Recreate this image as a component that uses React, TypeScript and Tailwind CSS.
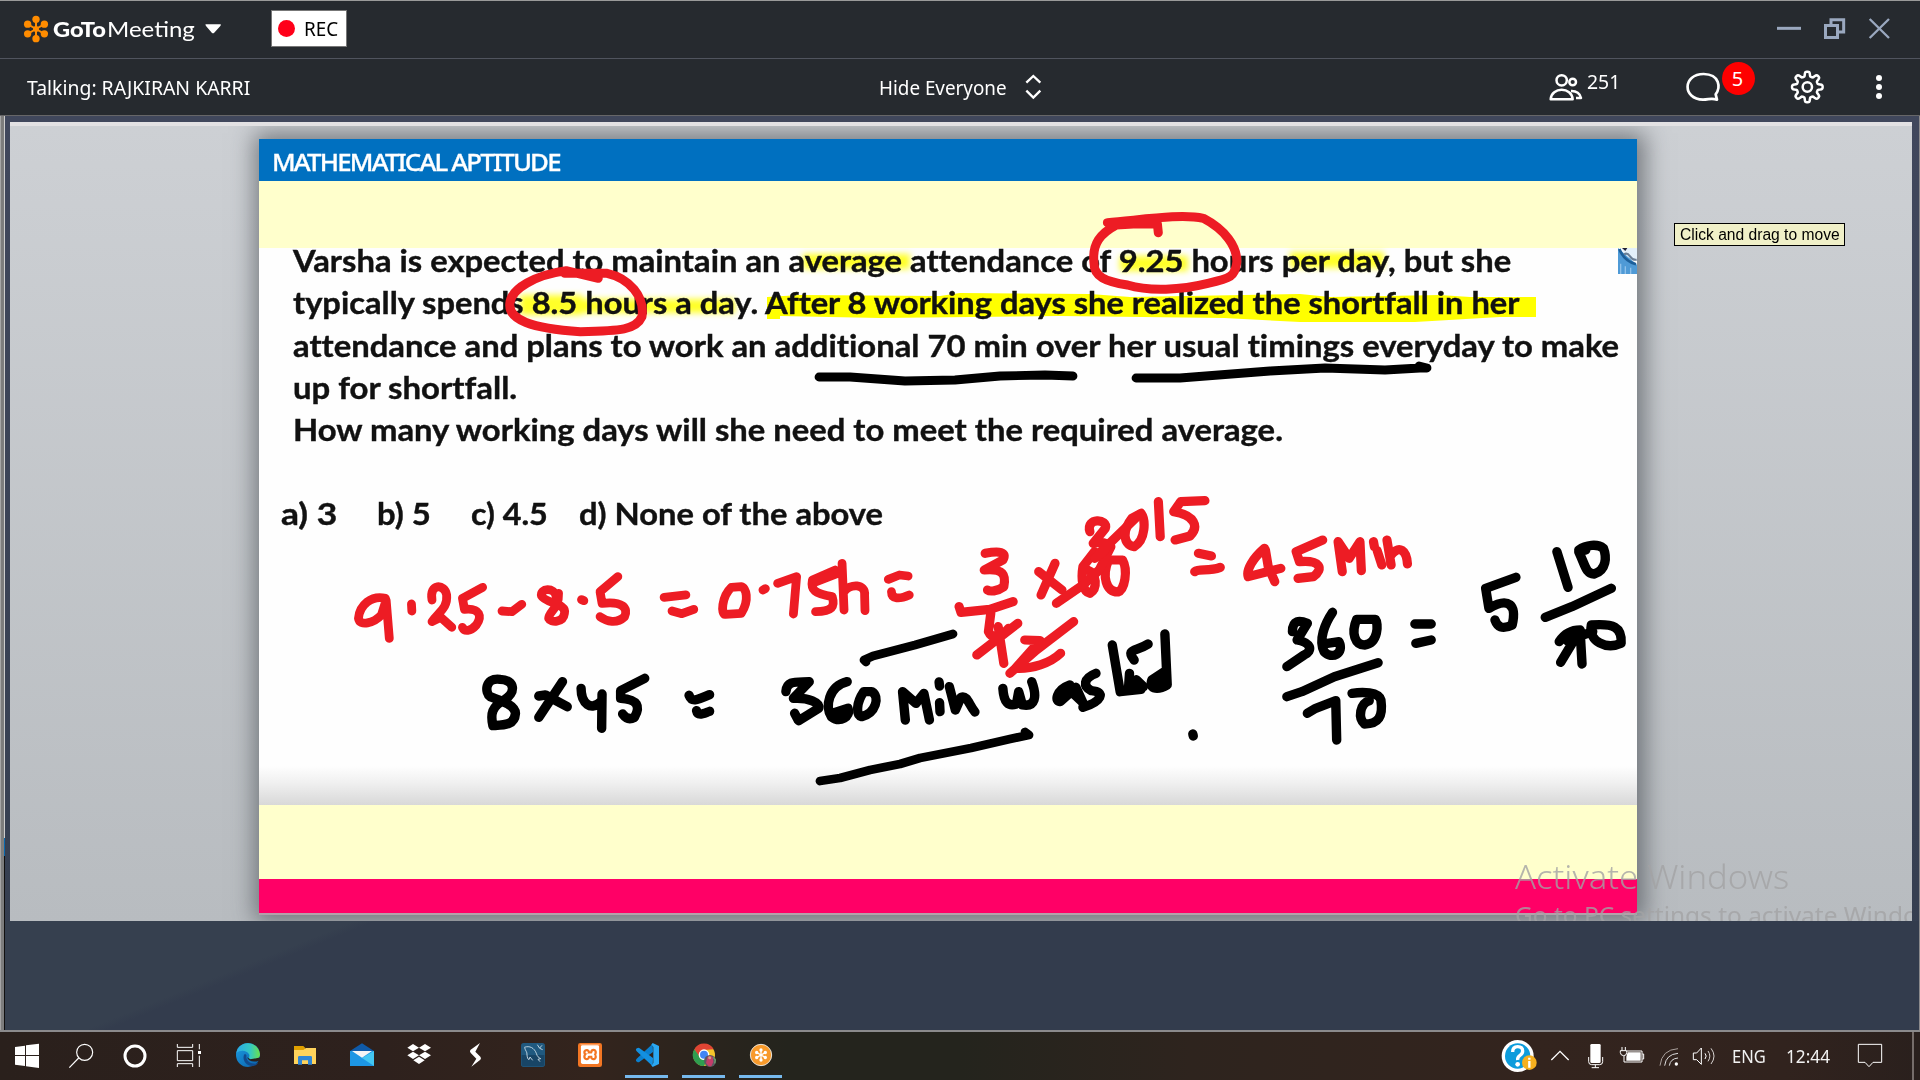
import React, { useLayoutEffect, useRef, useState } from "react";
import { SiXampp } from "react-icons/si";

/* Text squeezed or stretched horizontally to a given width. */
function Fit({ w, className = "", children }: { w: number; className?: string; children: string }) {
  const ref = useRef<HTMLSpanElement>(null);
  const [k, setK] = useState(1);
  useLayoutEffect(() => {
    if (ref.current) setK(w / ref.current.offsetWidth);
  }, [w]);
  return (
    <span className={"block shrink-0 " + className} style={{ width: w }}>
      <span ref={ref} className="inline-block origin-left whitespace-pre" style={{ transform: `scaleX(${k})` }}>
        {children}
      </span>
    </span>
  );
}

/* Toolbar icon: the view box is counted in thirds of a pixel. */
function Ico({ box, w, h, className = "", children }: { box: string; w: number; h: number; className?: string; children: React.ReactNode }) {
  return (
    <svg viewBox={box} width={w} height={h} fill="none" className={"block shrink-0 " + className}>
      {children}
    </svg>
  );
}

function Asterisk({ cx, cy, r, dot, line, color }: { cx: number; cy: number; r: number; dot: number; line: number; color: string }) {
  return (
    <g stroke={color} fill={color} strokeWidth={line}>
      {[30, 90, 150, 210, 270, 330].map((a) => {
        const x = cx + r * Math.cos((a * Math.PI) / 180);
        const y = cy + r * Math.sin((a * Math.PI) / 180);
        return (
          <g key={a}>
            <line x1={cx} y1={cy} x2={x} y2={y} />
            <circle cx={x} cy={y} r={dot} stroke="none" />
          </g>
        );
      })}
    </g>
  );
}

function TitleBar() {
  return (
    <header className="flex h-[58px] shrink-0 items-center border-t border-[#9a9a9a] bg-[#262a2f] pb-[2px] pl-[23px] font-['Noto_Sans',sans-serif] text-[20px] text-white">
      <Ico box="69 45 78 84" w={26} h={28}>
        <Asterisk cx={108} cy={87} r={29} dot={11} line={6} color="#ff8c00" />
        <circle cx={108} cy={87} r={9} fill="#ff8c00" />
      </Ico>
      <div className="ml-1 flex items-baseline gap-px font-[Lato,sans-serif] text-[21px]">
        <Fit w={53} className="font-black">GoTo</Fit>
        <Fit w={88} className="font-normal">Meeting</Fit>
      </div>
      <Ico box="615 72 51 33" w={17} h={11} className="ml-2.5">
        <path d="M617 76h44q4 1 0 5l-19 21q-3 2-6 0l-18-21q-3-4-1-5z" fill="#fff" />
      </Ico>
      <div className="ml-[49px] flex h-[37px] w-[76px] items-center border border-[#777] bg-white pl-1.5 text-black">
        <span className="size-[17px] rounded-full bg-[#ff0019]" />
        <Fit w={34} className="ml-[9px]">REC</Fit>
      </div>
      <Ico box="2322 45 360 84" w={120} h={28} className="mr-[26px] ml-auto">
        <g stroke="#9aa8bf">
          <path d="M2331 85h72" strokeWidth="9" />
          <path d="M2476.500 76.500h36v36h-36zM2493 72v-13h38v37h-15" strokeWidth="9" />
          <path d="M2609 57l58 57M2667 57l-58 57" strokeWidth="7" />
        </g>
      </Ico>
    </header>
  );
}

const gear = (() => {
  const pts: string[] = [];
  for (let i = 0; i <= 160; i++) {
    const a = (i / 160) * Math.PI * 2;
    const c = Math.cos(a * 8);
    const r = 39 + 7 * Math.tanh(2.2 * c);
    pts.push(`${(922 + r * Math.sin(a)).toFixed(1)} ${(260 - r * Math.cos(a)).toFixed(1)}`);
  }
  return "M" + pts.join("L") + "Z";
})();

function ToolBar() {
  return (
    <div className="flex h-[58px] shrink-0 items-center border-t border-b border-t-[#50545e] border-b-[#666668] bg-[#262a2f] pl-[27px] font-['Noto_Sans',sans-serif] text-[20px] text-white">
      <Fit w={223} className="pt-0.5">Talking: RAJKIRAN KARRI</Fit>
      <Fit w={128} className="ml-[629px] pt-0.5">Hide Everyone</Fit>
      <Ico box="552 216 57 90" w={19} h={30} className="ml-[17px]">
        <path d="M559 248l21-20 21 20M559 272l21 21 21-21" stroke="#fff" strokeWidth="7" />
      </Ico>
      <Ico box="144 216 105 90" w={35} h={30} className="ml-[505px]">
        <g stroke="#fff" strokeWidth="7.500" strokeLinejoin="round">
          <circle cx="185" cy="241" r="15.500" />
          <circle cx="218" cy="246" r="10" />
          <path d="M152 298c2-38 64-38 66 0zM213 273c16-1 28 8 30 21l-15 0" />
        </g>
      </Ico>
      <Fit w={33} className="relative -top-[5px] ml-1">251</Fit>
      <div className="relative ml-[65px]">
        <Ico box="552 212 111 96" w={37} h={32}>
          <path d="M648 298l-4-16c15-20 13-60-36-61-64 0-64 76-2 77 18 0 24-6 42 0z" stroke="#fff" strokeWidth="8" strokeLinejoin="round" />
        </Ico>
        <span className="absolute -top-[9px] left-[37px] flex size-[33px] items-center justify-center rounded-full bg-[#fe0000] pr-0.5">5</span>
      </div>
      <Ico box="870 206 105 108" w={35} h={36} className="ml-[68px]">
        <path d={gear} stroke="#fff" strokeWidth="7.500" />
        <circle cx="922" cy="260" r="14" stroke="#fff" strokeWidth="7.500" />
      </Ico>
      <Ico box="1125 222 24 78" w={8} h={26} className="ml-[50px]">
        <g fill="#fff">
          <circle cx="1137" cy="234" r="9" />
          <circle cx="1137" cy="261" r="9" />
          <circle cx="1137" cy="288" r="9" />
        </g>
      </Ico>
    </div>
  );
}

const redLeft = [
  "M140 175C105 165 75 195 72 235C75 260 110 250 130 225L142 180L150 295",
  "M206 192L207 213",
  "M258 180C250 130 290 130 295 165C298 205 275 215 258 245L280 232L308 262",
  "M386 142L335 175L340 208C380 203 385 230 370 255C355 275 340 275 335 262",
  "M435 213L460 215L485 193",
  "M572 170C568 140 530 145 535 168C545 190 600 190 593 220C590 250 558 248 553 235C553 215 580 205 578 160",
  "M636 179L642 182",
  "M728 110L683 155L688 190C740 182 755 205 745 230C725 252 700 245 683 230",
  "M845 172L900 165M865 213L890 221L920 208",
  "M1015 142C990 170 988 225 1000 223L1040 220C1062 180 1052 142 1040 140Z",
  "M1095 150L1101 146",
  "M1132 130L1180 110L1172 222",
  "M1278 90L1220 120C1215 150 1225 160 1270 170C1278 200 1270 215 1228 215",
  "M1230 125L1295 95M1295 70L1300 210M1300 155C1315 130 1355 130 1352 165L1353 212",
  "M1412 118L1440 105L1462 108M1420 155C1420 178 1440 178 1465 165",
];
const redRight = [
  "M140 220C170 212 188 215 178 240L138 270C180 265 185 285 180 320C165 335 150 335 145 330",
  "M84 380L88 397L150 388L200 365",
  "M152 400L147 455C155 480 175 470 190 445M168 440L180 550M210 430L122 525",
  "M225 480L258 482L205 565C240 568 280 550 302 520M330 425L250 510L193 580",
  "M290 250L260 345M255 275L305 330",
  "M375 215L350 260C345 300 350 335 365 340C382 325 380 280 360 270",
  "M405 240C390 290 400 335 425 336C440 330 447 270 435 240Z",
  "M293 370L350 315L385 270L410 200",
  "M365 155C355 112 405 115 398 145L372 190C405 180 415 200 375 235M385 220L470 105",
  "M455 115C435 150 435 195 460 200C485 180 485 120 475 100Z",
  "M512 65L516 170M612 62L560 65L545 95C590 105 600 140 580 168L548 180",
  "M598 220L626 228M590 275C600 265 620 275 645 262",
  "M740 205C715 235 700 270 705 290L775 265M742 210L748 260L762 305",
  "M865 180L808 215L815 245C860 240 868 265 845 290L812 295",
  "M907 275L898 185L922 235L945 185L948 272",
  "M974 185L976 200M982 212L992 255M1003 180L1012 255M1012 225C1030 195 1045 210 1047 252",
];
const blackLeft = [
  "M430 418C390 412 392 460 405 470C425 480 468 492 469 520C467 556 440 555 412 557C405 520 410 500 440 480C470 460 470 420 430 418",
  "M588 425L528 532M528 468L545 465L600 500",
  "M635 445C635 490 660 515 685 485M688 462L687 565",
  "M796 415L735 452L735 475C780 478 785 500 770 532C755 542 745 530 740 522",
  "M908 466C915 487 925 482 960 464M927 512C930 530 945 520 960 514",
  "M1153 455C1155 420 1180 427 1212 425L1172 475C1210 472 1240 488 1236 505L1185 542L1175 520",
  "M1308 425C1260 440 1252 500 1268 530C1290 550 1318 530 1310 505L1275 518",
  "M1350 455C1330 490 1330 525 1345 530C1380 520 1392 470 1370 455Z",
  "M1455 540L1448 455L1482 490L1502 460L1516 540",
];
const blackRight = [
  "M41 606L42 618M42 668L43 695",
  "M63 620L76 690L88 652C102 645 105 675 118 696",
  "M178 625C180 668 190 680 207 672L212 635L220 675C248 682 252 650 240 605",
  "M322 615C292 630 288 668 302 664L325 635L350 668L335 622",
  "M378 580C350 595 350 620 368 632C400 635 390 665 350 682",
  "M413 495L430 635L475 628M450 580L448 622L465 600L480 620",
  "M460 540C440 505 465 515 490 492",
  "M526 462L531 615C515 628 490 632 498 600L525 575L515 615",
  "M586 762L587 768",
  "M800 455C800 420 815 420 832 430L810 480C840 488 845 512 825 525L788 560",
  "M886 397C870 430 855 480 868 515C885 540 912 520 900 485L875 490",
  "M938 418C925 460 935 495 955 495C985 490 985 430 978 418Z",
  "M1063 432L1098 432M1065 490L1098 480",
  "M788 650L820 635L890 590L984 548",
  "M832 700L850 685L893 662L895 780",
  "M928 640C950 635 985 635 990 660C995 710 985 732 955 732C940 715 945 670 965 662",
  "M1280 292L1215 325L1222 385C1265 350 1282 375 1272 435C1250 450 1240 440 1235 420",
  "M1368 215L1392 322M1430 210L1415 215C1430 260 1430 280 1448 282C1475 270 1475 230 1468 205C1455 190 1430 195 1415 210",
  "M1343 412L1400 380L1485 325",
  "M1373 485C1385 460 1400 450 1418 450L1376 547M1418 455L1422 552M1390 482L1445 455",
  "M1442 435C1435 485 1475 510 1506 490C1508 440 1490 430 1442 435",
];

function Strokes({ paths, matrix, color, width }: { paths: string[]; matrix: string; color: string; width: number }) {
  return (
    <g transform={matrix} stroke={color} strokeWidth={width} strokeLinecap="round" strokeLinejoin="round">
      {paths.map((d) => (
        <path key={d} d={d} vectorEffect="non-scaling-stroke" />
      ))}
    </g>
  );
}

const leftHalf = "translate(330 540) scale(0.39541 0.33333)";
const rightHalf = "translate(920 480) scale(0.46556 0.33333)";

/* Freehand pen strokes laid over the slide. */
function Ink() {
  return (
    <svg viewBox="259 139 1378 776" fill="none" className="pointer-events-none absolute inset-0 h-[776px] w-[1378px]">
      <Strokes paths={redLeft} matrix={leftHalf} color="#ed1c24" width={8.8} />
      <Strokes paths={redRight} matrix={rightHalf} color="#ed1c24" width={9.2} />
      <Strokes paths={blackLeft} matrix={leftHalf} color="#000" width={9.4} />
      <Strokes paths={blackRight} matrix={rightHalf} color="#000" width={9.4} />
      <Strokes
        paths={[
          "M819 377L850 377L905 381L955 380L1000 376L1045 375L1073 376",
          "M1136 378L1180 378L1270 371L1325 368L1385 370L1420 368L1427 368L1419 366",
          "M866 662L864 660L873 656L915 645L953 634",
          "M820 781L840 778L870 770L900 764L920 758L971 748L1010 739L1029 735L1025 732",
        ]}
        matrix=""
        color="#000"
        width={8.8}
      />
      <Strokes
        paths={["M780 175L708 152C640 165 585 205 582 250C578 300 630 325 740 335C830 332 865 330 878 290C885 230 850 175 800 160L705 160"]}
        matrix="translate(250 220) scale(0.44643 0.33333)"
        color="#ed1c24"
        width={9}
      />
      <Strokes
        paths={["M489 98L487 72L375 68C450 60 540 40 590 55C640 90 665 140 665 185C662 230 650 235 600 250C540 270 470 275 420 255C370 245 345 230 345 190C340 130 360 100 395 75L480 68"]}
        matrix="translate(940 200) scale(0.44643 0.33333)"
        color="#ed1c24"
        width={9}
      />
    </svg>
  );
}

/* Marker highlights under the question text. */
function Marker() {
  return (
    <svg viewBox="259 139 1378 776" className="pointer-events-none absolute inset-0 h-[776px] w-[1378px]">
      <g fill="#ffff28" className="blur-[3px]">
        <path d="M803 254h107v15H803z" />
        <path d="M520 295h62v20h-62zM582 299h153v14H582z" />
        <path d="M1120 256h68v15h-68zM1290 252h94v16h-94z" />
      </g>
      <path fill="#ffff00" d="M767 297L800 295L940 296L960 293L1090 294L1130 297L1300 294L1330 297L1440 295L1470 297H1536V317H1500L1415 322H1300L1224 318L1060 316L880 318L780 316V319H767Z" />
    </svg>
  );
}

function Slide() {
  return (
    <div className="relative ml-[249px] h-[776px] w-[1378px] shrink-0 bg-white shadow-[2px_0_22px_6px_rgba(60,65,72,0.6)]">
      <div className="flex h-[42px] items-center bg-[#0070c0] pt-[3px] pl-[13px] font-['Noto_Sans',sans-serif] text-[24px] font-medium tracking-[-1.7px] text-white [-webkit-text-stroke:0.3px_white]">
        <Fit w={288}>MATHEMATICAL APTITUDE</Fit>
      </div>
      <div className="h-[67px] bg-[#ffffcc]" />
      <div className="h-[557px] bg-[linear-gradient(to_bottom,#fefefe_93%,#f0f0f0_96%,#d8d8d8_100%)]">
        <Marker />
        <div className="relative -top-[9px] pl-[34px] font-[Lato,sans-serif] text-[31px] leading-[42.300px] font-bold text-[#111] [-webkit-text-stroke:0.4px_#111] [font-variant-ligatures:none]">
          <Fit w={1218}>Varsha is expected to maintain an average attendance of 9.25 hours per day, but she</Fit>
          <Fit w={1226}>typically spends 8.5 hours a day. After 8 working days she realized the shortfall in her</Fit>
          <Fit w={1326}>attendance and plans to work an additional 70 min over her usual timings everyday to make</Fit>
          <Fit w={224}>up for shortfall.</Fit>
          <Fit w={990}>How many working days will she need to meet the required average.</Fit>
          <div className="mt-[42px] -ml-3 flex">
            <Fit w={56}>a) 3</Fit>
            <Fit w={54} className="ml-[40px]">b) 5</Fit>
            <Fit w={77} className="ml-[40px]">c) 4.5</Fit>
            <Fit w={304} className="ml-[31px]">d) None of the above</Fit>
          </div>
        </div>
      </div>
      <div className="h-[74px] bg-[#ffffcc]" />
      <div className="h-[36px] border-b-2 border-[#b4a0aa] bg-[#ff0066]" />
      <svg viewBox="354 743 57 78" width="19" height="26" className="absolute top-[109px] right-0">
        <path d="M354 743l57 50v28h-57z" fill="#4f9ad6" />
        <path d="M364 743h47v37q-30-2-47-37z" fill="#e3f0fa" />
        <path d="M358 746q14 36 50 46" stroke="#1d5f9a" strokeWidth="8" fill="none" />
        <path d="M372 762q10-6 18 6t20 10" stroke="#6a7f96" strokeWidth="6" fill="none" />
        <path d="M366 743h16l-6 9z" fill="#223" />
        <path d="M362 790v31M376 798v23M392 802v19" stroke="#8fc1ea" strokeWidth="4" />
      </svg>
      <Ink />
    </div>
  );
}

function SharedScreen() {
  return (
    <main className="relative ml-[10px] h-[799px] w-[1902px] shrink-0 overflow-hidden border-t-4 border-[#e2e1e3] bg-linear-to-b from-[#cdd0d4] to-[#b8bcc0] pt-[13px]">
      <Slide />
      <span className="absolute -top-[3px] left-[931px] h-[2px] w-[40px] bg-[#444]" />
      <span className="absolute top-[97px] left-[1664px] flex h-[23px] w-[171px] items-center border border-black bg-[#f0f0c8] pt-px pl-[5px] font-['Liberation_Sans',sans-serif] text-[16px] text-black">
        <Fit w={160}>Click and drag to move</Fit>
      </span>
      <div className="absolute top-[729px] left-[1505px] font-['Noto_Sans',sans-serif] text-[#a2a3a4]/80">
        <Fit w={274} className="text-[33px] leading-[44px] font-light">Activate Windows</Fit>
        <Fit w={440} className="text-[24px] leading-[32px]">Go to PC settings to activate Windows.</Fit>
      </div>
    </main>
  );
}

function Btn({ x, active = false, w = "w-[57px]", children }: { x: number; active?: boolean; w?: string; children: React.ReactNode }) {
  return (
    <div className={"flex h-[48px] flex-col items-center justify-end " + w}>
      <Ico box={`${x * 3} 36 126 129`} w={42} h={43}>
        {children}
      </Ico>
      <span className={active ? "h-[3px] w-[43px] bg-[#76b9ed]" : "h-[3px] w-[43px]"} />
      <span className="h-[2px]" />
    </div>
  );
}

function TaskBar() {
  return (
    <footer className="flex h-[48px] shrink-0 items-center bg-[linear-gradient(to_right,#2a201c_0%,#2e211d_20%,#33241d_31%,#24241d_41%,#24241d_50%,#2e241e_62%,#33241e_80%,#31231e_93%,#2a201d_100%)] font-['Noto_Sans',sans-serif] text-[18px] text-[#f2f2f2]">
      <Btn x={6} w="w-[54px]">
        <path fill="#fff" d="M45 81l30-4v28H45zM78 76l39-5v34H78zM45 108h30v30l-30-4zM78 108h39v36l-39-5z" />
      </Btn>
      <Btn x={60} w="w-[54px]">
        <g stroke="#fff" strokeWidth="3.500">
          <circle cx="254" cy="97" r="24" />
          <path d="M236 114l-28 29" />
        </g>
      </Btn>
      <Btn x={114} w="w-[54px]">
        <circle cx="405" cy="108" r="30" stroke="#fff" strokeWidth="9" />
      </Btn>
      <Btn x={168} w="w-[54px]">
        <path stroke="#fff" strokeWidth="3" d="M532 72v10h46V72M532 92h46v30h-46zM532 141v-10h46v10M598 72v16M598 107v34" />
        <path fill="#fff" d="M594 93h9v9h-9z" />
      </Btn>
      <span className="w-[3px]" />
      <Btn x={227}>
        <defs>
          <linearGradient id="edgeTop" x1="0" x2="1">
            <stop offset="0" stopColor="#2aa9e8" />
            <stop offset=".6" stopColor="#35c8c0" />
            <stop offset="1" stopColor="#6be04a" />
          </linearGradient>
          <linearGradient id="edgeSide" x1="0" x2="1" y2="1">
            <stop offset="0" stopColor="#1b9de2" />
            <stop offset="1" stopColor="#0a5ea8" />
          </linearGradient>
        </defs>
        <circle cx="744" cy="105" r="36" fill="url(#edgeSide)" />
        <path d="M709 99c6-40 66-40 71 4 0 14-16 20-31 14-6-3 2-6-2-14-6-12-26-14-38-4z" fill="url(#edgeTop)" />
        <path d="M732 104c-6 18 8 34 24 34 8 0 14-3 19-9-14 6-35-2-36-18 2-8-3-10-7-7z" fill="#114a8c" />
        <path d="M741 112c4 12 20 16 36 10l6-10-32 6z" fill="#29211d" />
      </Btn>
      <Btn x={284}>
        <path fill="#e0a000" d="M882 78h28l6 6v12h-34z" />
        <path fill="#ffd35c" d="M882 90h28l8-6h30v48h-66z" />
        <path fill="#2f86d6" d="M894 134v-22q0-4 4-4h34q4 0 4 4v22h-12v-13h-18v13z" />
      </Btn>
      <Btn x={341}>
        <path fill="#0f5aa8" d="M1050 93l36-23 36 23v10h-72z" />
        <path fill="#1d96e4" d="M1050 93h72v45h-72z" />
        <path fill="#43c7f2" d="M1122 93v45l-36-24z" />
        <path fill="#f5f5f5" d="M1056 93h60l-30 20z" />
      </Btn>
      <Btn x={398}>
        <path transform="translate(1200 0)" fill="#fff" d="M39 72l18 11-18 11-17-11zM75 72l18 11-18 11-18-11zM39 95l18 11-18 11-17-11zM75 95l18 11-18 11-18-11zM57 110l17 11-17 11-17-11z" />
      </Btn>
      <Btn x={455}>
        <path transform="translate(1200 0)" fill="#fff" d="M240 69l-29 21q-3 6 2 10l16 16-15 24 27-21q4-5 0-9l-15-15z" />
      </Btn>
      <Btn x={512}>
        <g transform="translate(1200 0)">
          <rect x="363" y="69" width="72" height="72" rx="8" fill="#20597f" />
          <path d="M365 105h68v28q0 6-6 6h-56q-6 0-6-6z" fill="#184566" />
          <path d="M373 82c16-6 30 2 36 18 3 10 6 12 13 16l-8 2 6 7M374 83c2 10 8 12 7 22 1 8 2 12 6 14l3-8 8 10M412 74l7 11 9 4M419 84l7-8" stroke="#d8e8f0" strokeWidth="2.500" />
        </g>
      </Btn>
      <Btn x={569}>
        <rect x="1734" y="69" width="72" height="72" rx="7" fill="#f37623" />
        <path d="M1740 73h60l-6 5h-48z" fill="#ffb27c" />
        <SiXampp x={1742} y={76} size={56} color="#fff" />
      </Btn>
      <Btn x={626} active>
        <g transform="translate(1200 0)">
          <path fill="#0a7fce" d="M758 71l-48 45q-5 6 1 9 4 3 8 0l40-29z" />
          <path fill="#1390e0" d="M758 139l-48-45q-5-6 1-9 4-3 8 0l40 29z" />
          <path fill="#2aa8f2" d="M758 69l19 9v54l-19 9-4-5q6-3 6-8V82q0-5-6-8z" />
        </g>
      </Btn>
      <Btn x={683} active>
        <g transform="translate(1200 0)">
          <circle cx="912" cy="105" r="33" fill="#f5c52b" />
          <path fill="#e04433" d="M883 88a33 33 0 0 1 58 0l-29 2-14 24z" />
          <path fill="#2f9e50" d="M883 88a33 33 0 0 0 29 50l14-26-26 0z" />
          <circle cx="912" cy="104" r="16" fill="#fff" />
          <circle cx="912" cy="104" r="12" fill="#4285f4" />
          <circle cx="930" cy="123" r="18" fill="#5c5a60" />
          <path d="M922 112q8-8 16 0l2 14-6 13h-8l-8-10z" fill="#c43d6a" />
          <circle cx="929" cy="113" r="4.500" fill="#d9a07c" />
          <path d="M940 112l6 8-2 10" stroke="#6a9e6a" strokeWidth="4" />
        </g>
      </Btn>
      <Btn x={740} active>
        <circle cx="2283" cy="105" r="32" fill="#f89a2b" stroke="#e8e4dc" strokeWidth="3" />
        <Asterisk cx={2283} cy={105} r={15} dot={5} line={4} color="#fff" />
      </Btn>

      <Ico box="60 60 117 108" w={39} h={36} className="ml-auto">
        <circle cx="113" cy="114" r="48" fill="#fff" />
        <circle cx="113" cy="114" r="38" fill="#0c9cdc" />
        <path d="M98 102q0-16 15-16t15 13q0 8-8 13t-7 14" stroke="#fff" strokeWidth="10" />
        <circle cx="113" cy="139" r="7" fill="#fff" />
        <circle cx="148" cy="134" r="22" fill="#f6b01e" />
        <path d="M148 129v20M148 119v6" stroke="#fff" strokeWidth="7" />
      </Ico>
      <Ico box="207 60 63 96" w={21} h={32} className="ml-2.5">
        <path d="M214 120l26-26 26 26" stroke="#fff" strokeWidth="4" />
      </Ico>
      <Ico box="321 60 51 96" w={17} h={32} className="ml-[17px]">
        <rect x="331" y="72" width="31" height="57" rx="4" fill="#fff" />
        <path d="M326 111v14q0 9 9 9h24q9 0 9-9v-14M346 134v9M335 143h22" stroke="#fff" strokeWidth="3" />
      </Ico>
      <Ico box="417 60 78 96" w={26} h={32} className="ml-[15px]">
        <path d="M441 93h45v33h-54v-18M487 102h4v15h-4M426 81v11M436 81v11M421 92h19v6q0 9-9 9t-10-9z" stroke="#fff" strokeWidth="3" />
        <path d="M443 97h39v25h-43v-12z" fill="#fff" />
      </Ico>
      <Ico box="537 60 60 96" w={20} h={32} className="ml-[14px]">
        <path d="M540 137q5-48 54-51" stroke="#aaa19d" strokeWidth="3" />
        <path d="M554 137q4-34 40-37M568 137q3-21 26-23" stroke="#ddd" strokeWidth="3" />
        <circle cx="589" cy="132" r="5" fill="#fff" />
      </Ico>
      <Ico box="636 60 72 96" w={24} h={32} className="ml-[13px]">
        <path d="M640 99h10l14-15v49l-14-14h-10zM675 100q7 8 0 17" stroke="#fff" strokeWidth="3" />
        <path d="M684 93q11 15 0 31M693 85q18 23 0 47" stroke="#d8d4d2" strokeWidth="3" />
      </Ico>
      <Fit w={34} className="ml-[16px]">ENG</Fit>
      <Fit w={44} className="ml-[20px]">12:44</Fit>
      <Ico box="1131 60 78 96" w={26} h={32} className="ml-[27px]">
        <path d="M1135 73h70v54h-26l-12 13-12-13h-20z" stroke="#fff" strokeWidth="3" />
      </Ico>
      <span className="mr-[6px] ml-[29px] h-[48px] w-[2px] bg-[#766d6a]" />
    </footer>
  );
}

export default function App() {
  return (
    <div className="flex h-[1080px] w-[1920px] flex-col overflow-hidden bg-[#262a2f]">
      <TitleBar />
      <ToolBar />
      <div className="flex h-[916px] shrink-0 border-r border-b-2 border-[#8b8a8c]">
        <div className="flex w-[5px] shrink-0">
          <span className="w-px bg-[#a5a5a5]" />
          <span className="w-[3px] bg-[#7d7d7d]" />
          <span className="w-px bg-[linear-gradient(to_bottom,#ccc_79%,#0a68ad_79%,#0a68ad_81%,#111_81%)]" />
        </div>
        <div className="-ml-[5px] flex grow flex-col bg-[linear-gradient(to_bottom,#40475c_0%,#363f51_85%,#333c4d_100%)] bg-clip-content pt-0 pl-[5px]">
          <div className="-ml-[5px] pt-[6px]">
            <SharedScreen />
          </div>
          <div className="min-h-0 grow bg-[linear-gradient(158deg,#36404f_0%,#36404f_16%,#333c4d_17%,#333c4d_100%)]" />
        </div>
      </div>
      <TaskBar />
    </div>
  );
}
